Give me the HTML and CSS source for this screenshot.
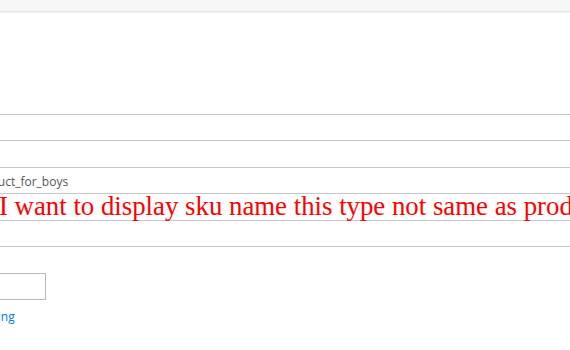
FILE: index.html
```html
<!DOCTYPE html>
<html lang="en">
<head>
    <meta charset="UTF-8">
    <title>Product Edit</title>
    <link rel="stylesheet" href="styles.css">
</head>
<body>
    <div class="top-bar"></div>

    <div class="page">
        <div class="grid">
            <div class="grid-row"></div>
            <div class="grid-row"></div>
            <div class="grid-row"><span class="sku">product_for_boys</span></div>
            <div class="grid-row"><span class="note">I want to display sku name this type not same as product name</span></div>
            <div class="grid-row"></div>
        </div>

        <div class="price-field">
            <input type="text" class="price-input">
            <a href="#" class="advanced-link">Advanced Pricing</a>
        </div>
    </div>
</body>
</html>
```

FILE: styles.css
```css
html, body {
    margin: 0;
    padding: 0;
    background: #fff;
    overflow: hidden;
}
body {
    font-family: "Open Sans", Arial, sans-serif;
    font-size: 12px;
    color: #555;
}
.top-bar {
    height: 11px;
    background-color: #f7f7f7;
    border-bottom: 1px solid #e3e3e3;
    box-shadow: 0 1px 1px rgba(0, 0, 0, 0.04);
}
.page {
    margin-left: -200px;
    padding-top: 102px;
}
.grid {
    width: 1000px;
    border-bottom: 1px solid #c8c8c8;
}
.grid-row {
    height: 25.4px;
    border-top: 1px solid #c8c8c8;
    display: flex;
    align-items: center;
    white-space: nowrap;
}
.sku {
    margin-left: 171px;
    padding-top: 2px;
}
.note {
    margin-left: 199px;
    font-family: "Liberation Serif", "Times New Roman", serif;
    font-size: 26.8px;
    color: red;
    line-height: 25px;
}
.price-field {
    padding-top: 26px;
}
.price-input {
    display: block;
    width: 246px;
    height: 27px;
    box-sizing: border-box;
    border: 1px solid #b8b8b8;
    border-radius: 0;
    padding: 0 8px;
    margin: 0;
}
.advanced-link {
    display: inline-block;
    margin-top: 8px;
    margin-left: 119px;
    color: #007bdb;
    text-decoration: none;
    font-size: 12px;
}
```
